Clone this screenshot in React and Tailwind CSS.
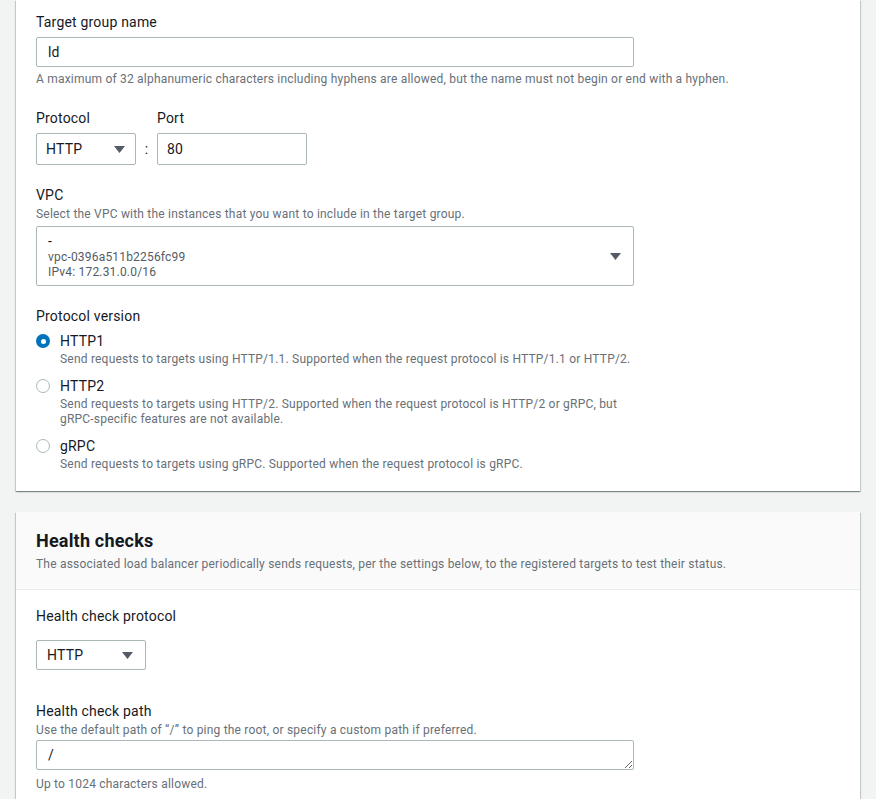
import React from 'react';

const FONT = 'Roboto, "Noto Sans", sans-serif';

const Caret = () => (
  <svg width="11" height="7" viewBox="0 0 11 7" className="shrink-0">
    <path d="M0 0h11L5.5 7z" fill="#545b64" />
  </svg>
);

const Radio = ({ checked }) =>
  checked ? (
    <span className="mt-[4px] flex h-[14px] w-[14px] shrink-0 items-center justify-center rounded-full bg-[#0073bb]">
      <span className="h-[5px] w-[5px] rounded-full bg-white" />
    </span>
  ) : (
    <span className="mt-[4px] h-[14px] w-[14px] shrink-0 rounded-full border border-[#aab7b8] bg-white" />
  );

const RadioOption = ({ checked, label, children }) => (
  <div className="flex gap-[10px]">
    <Radio checked={checked} />
    <div>
      <div className="text-[14px] leading-[22px] text-[#16191f]">{label}</div>
      <div className="text-[12px] leading-[15px] tracking-[0.017em] text-[#687078]">{children}</div>
    </div>
  </div>
);

const App = () => {
  return (
    <div className="min-h-[799px] bg-[#f2f3f3] px-4 pb-10 tracking-[0.012em]" style={{ fontFamily: FONT }}>
      {/* target group details card */}
      <section className="bg-white px-5 pt-[11px] pb-[19px] shadow-[0_1px_1px_0_rgba(0,28,36,0.3),1px_1px_1px_0_rgba(0,28,36,0.15),-1px_1px_1px_0_rgba(0,28,36,0.15)]">
        <label className="block text-[14px] leading-[22px] text-[#16191f]">Target group name</label>
        <div className="mt-[4px] flex h-[30px] w-[598px] items-center rounded-[2px] border border-[#aab7b8] px-[11px] text-[14px] text-[#16191f]">
          ld
        </div>
        <p className="mt-[4px] text-[12px] leading-[16px] tracking-[0.017em] text-[#687078]">
          A maximum of 32 alphanumeric characters including hyphens are allowed, but the name must not begin or end with a hyphen.
        </p>

        <div className="mt-[20px] flex items-end">
          <div>
            <label className="block text-[14px] leading-[22px] text-[#16191f]">Protocol</label>
            <div className="mt-[4px] flex h-[32px] w-[100px] items-center justify-between rounded-[2px] border border-[#aab7b8] pl-[9px] pr-[10px] text-[14px] text-[#16191f]">
              HTTP
              <Caret />
            </div>
          </div>
          <span className="flex h-[32px] w-[21px] items-center justify-center text-[14px] text-[#16191f]">:</span>
          <div>
            <label className="block text-[14px] leading-[22px] text-[#16191f]">Port</label>
            <div className="mt-[4px] flex h-[32px] w-[150px] items-center rounded-[2px] border border-[#aab7b8] px-[9px] text-[14px] text-[#16191f]">
              80
            </div>
          </div>
        </div>

        <label className="mt-[19px] block text-[14px] leading-[22px] text-[#16191f]">VPC</label>
        <p className="text-[12px] leading-[16px] tracking-[0.017em] text-[#687078]">
          Select the VPC with the instances that you want to include in the target group.
        </p>
        <div className="mt-[4px] flex h-[60px] w-[598px] items-center justify-between rounded-[2px] border border-[#aab7b8] pl-[11px] pr-[12px]">
          <div className="pt-[1px]">
            <div className="text-[14px] leading-[17px] text-[#16191f]">-</div>
            <div className="text-[12px] leading-[15px] text-[#545b64]">vpc-0396a511b2256fc99</div>
            <div className="text-[12px] leading-[15px] text-[#545b64]">IPv4: 172.31.0.0/16</div>
          </div>
          <Caret />
        </div>

        <label className="mt-[19px] block text-[14px] leading-[22px] text-[#16191f]">Protocol version</label>
        <div className="mt-[3px] flex flex-col gap-[8px]">
          <RadioOption checked label="HTTP1">
            Send requests to targets using HTTP/1.1. Supported when the request protocol is HTTP/1.1 or HTTP/2.
          </RadioOption>
          <RadioOption label="HTTP2">
            Send requests to targets using HTTP/2. Supported when the request protocol is HTTP/2 or gRPC, but
            <br />
            gRPC-specific features are not available.
          </RadioOption>
          <RadioOption label="gRPC">
            Send requests to targets using gRPC. Supported when the request protocol is gRPC.
          </RadioOption>
        </div>
      </section>

      {/* health checks card */}
      <section className="mt-[21px] bg-white shadow-[0_1px_1px_0_rgba(0,28,36,0.3),1px_1px_1px_0_rgba(0,28,36,0.15),-1px_1px_1px_0_rgba(0,28,36,0.15)]">
        <header className="border-b border-[#eaeded] bg-[#fafafa] px-5 pt-[17px] pb-[17px]">
          <h2 className="text-[18px] font-bold leading-[24px] text-[#16191f]">Health checks</h2>
          <p className="mt-[3px] text-[12px] leading-[16px] tracking-[0.017em] text-[#687078]">
            The associated load balancer periodically sends requests, per the settings below, to the registered targets to test their status.
          </p>
        </header>
        <div className="px-5 pt-[15px] pb-[20px]">
          <label className="block text-[14px] leading-[22px] text-[#16191f]">Health check protocol</label>
          <div className="mt-[13px] flex h-[30px] w-[110px] items-center justify-between rounded-[2px] border border-[#aab7b8] pl-[10px] pr-[12px] text-[14px] text-[#16191f]">
            HTTP
            <Caret />
          </div>

          <label className="mt-[30px] block text-[14px] leading-[22px] text-[#16191f]">Health check path</label>
          <p className="text-[12px] leading-[16px] tracking-[0.017em] text-[#687078]">
            Use the default path of “/” to ping the root, or specify a custom path if preferred.
          </p>
          <textarea
            rows={1}
            defaultValue="/"
            className="mt-[2px] block h-[30px] w-[598px] resize rounded-[2px] border border-[#aab7b8] px-[11px] py-[4px] text-[14px] leading-[20px] text-[#16191f] outline-none"
            style={{ fontFamily: FONT }}
          />
          <p className="mt-[6px] text-[12px] leading-[16px] tracking-[0.017em] text-[#687078]">Up to 1024 characters allowed.</p>
        </div>
      </section>
    </div>
  );
};

export default App;
